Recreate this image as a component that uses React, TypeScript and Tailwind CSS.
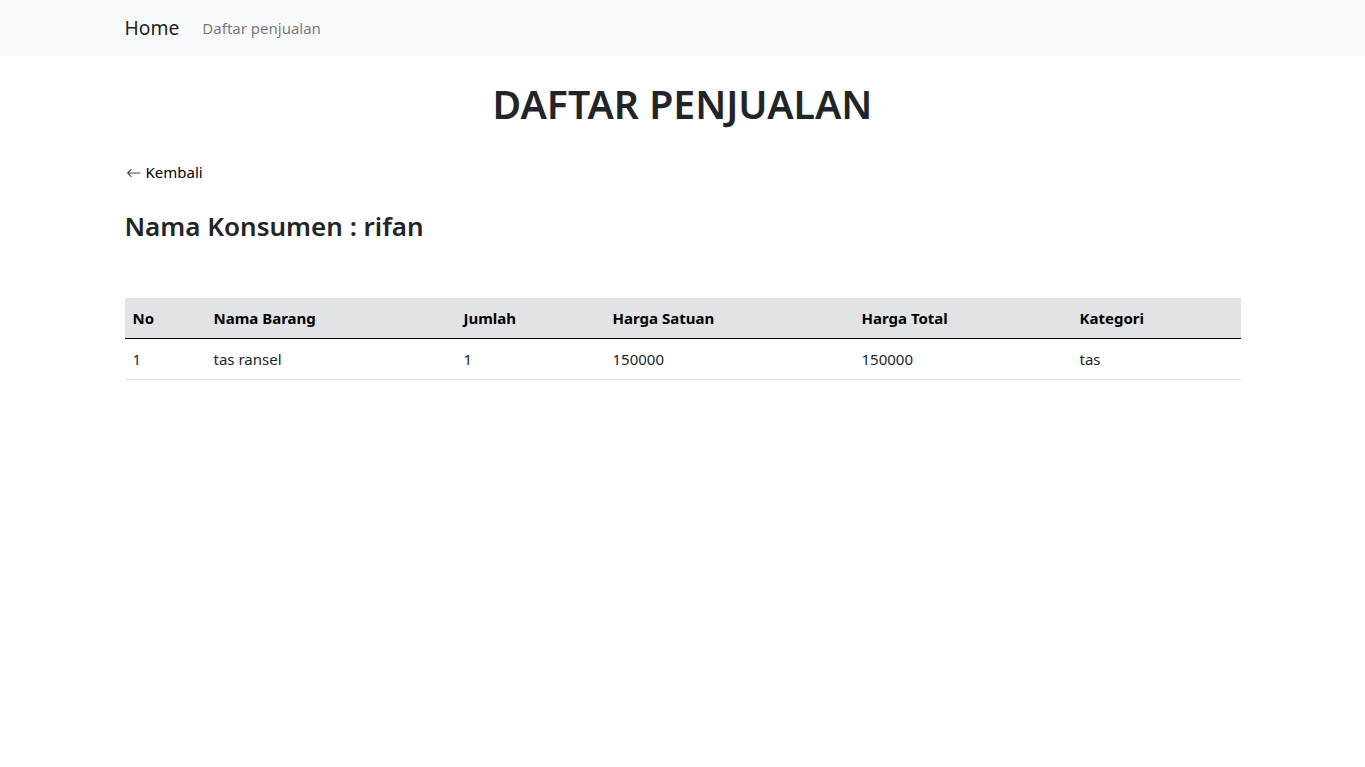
import React from "react";

const font = { fontFamily: '"Noto Sans", "Open Sans", sans-serif' };

export default function App() {
  const cols = [
    { h: "No", w: "w-[81px]" },
    { h: "Nama Barang", w: "w-[250px]" },
    { h: "Jumlah", w: "w-[149px]" },
    { h: "Harga Satuan", w: "w-[249px]" },
    { h: "Harga Total", w: "w-[218px]" },
    { h: "Kategori", w: "w-[169px]" },
  ];
  const row = ["1", "tas ransel", "1", "150000", "150000", "tas"];
  return (
    <div className="min-h-screen bg-white text-[#212529]" style={font}>
      <nav className="h-[56px] bg-[#f8f9fa] flex items-center">
        <div className="w-[1116px] mx-auto flex items-center">
          <span className="text-[19.3px] text-black/90 mr-[23px]">Home</span>
          <span className="text-[15px] text-black/55">Daftar penjualan</span>
        </div>
      </nav>
      <div className="w-[1116px] mx-auto">
        <h1 className="mt-[24px] text-center text-[39.2px] leading-[48px] font-semibold">DAFTAR PENJUALAN</h1>
        <div className="mt-[32px] text-[15px] leading-[24px] text-black flex items-center">
          <svg width="16" height="10" viewBox="0 0 16 10" className="ml-[1px] mr-[4px] mt-[2px]">
            <path d="M14.5 5H2M5.5 1.2L1.6 5l3.9 3.8" stroke="#444" strokeWidth="1.1" fill="none" />
          </svg>
          <span>Kembali</span>
        </div>
        <h2 className="mt-[23px] text-[26px] leading-[38px] font-semibold">Nama Konsumen : rifan</h2>
        <table className="mt-[53px] w-full text-[15px] border-collapse">
          <thead>
            <tr className="bg-[#e2e3e5] border-b border-black">
              {cols.map((c) => (
                <th key={c.h} className={`${c.w} text-left font-bold text-black px-[8px] h-[40px]`}>{c.h}</th>
              ))}
            </tr>
          </thead>
          <tbody>
            <tr className="border-b border-[#dee2e6]">
              {row.map((v, i) => (
                <td key={i} className="px-[8px] h-[41px] pt-[1px]">{v}</td>
              ))}
            </tr>
          </tbody>
        </table>
      </div>
    </div>
  );
}
